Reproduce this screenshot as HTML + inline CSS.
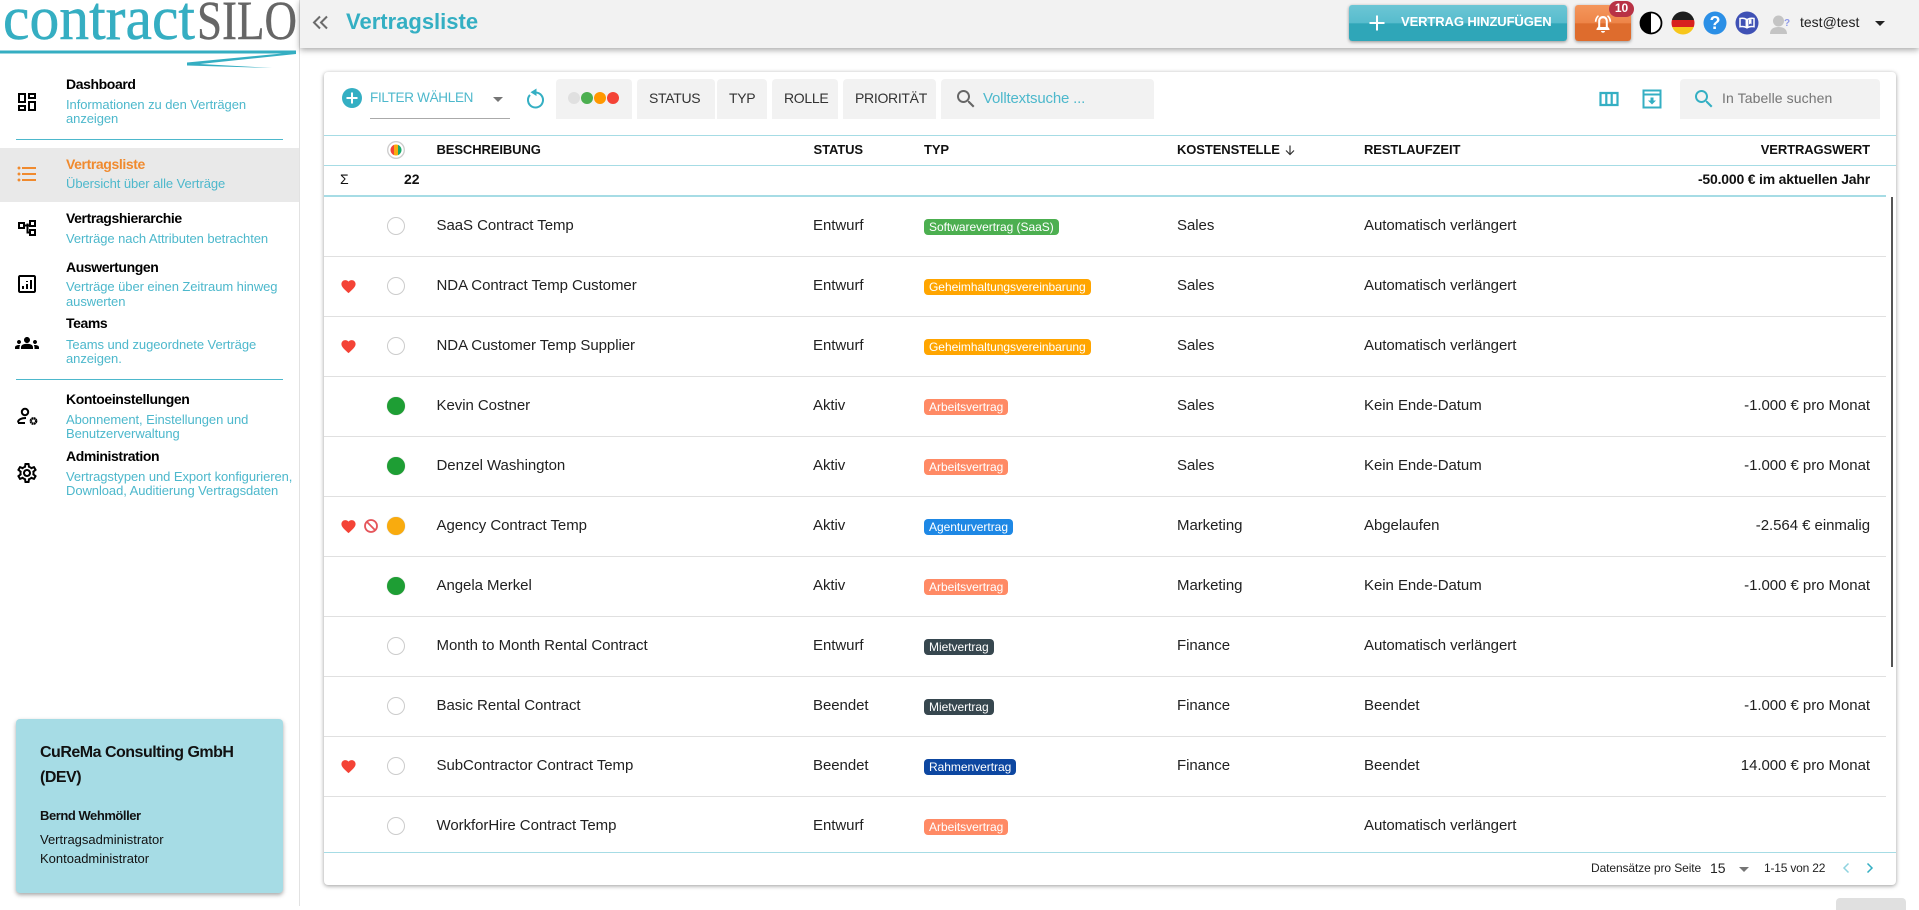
<!DOCTYPE html>
<html lang="de"><head><meta charset="utf-8"><title>Vertragsliste</title>
<style>
*{box-sizing:border-box}
html,body{margin:0;padding:0;width:1919px;height:906px;overflow:hidden;background:#fff;font-family:"Liberation Sans",sans-serif;color:#212121}
.t{position:absolute;line-height:20px;white-space:nowrap}
.a{position:absolute}
svg{position:absolute;display:block}
.nt{left:66px;font-size:14px;font-weight:bold;color:#000;letter-spacing:-.4px}
.ns{left:66px;font-size:13px;color:#4db8cc;letter-spacing:-.07px;line-height:14px}
.chip{position:absolute;top:79px;height:40px;background:#f2f2f2;border-radius:4px 4px 0 0;font-size:14px;line-height:38px;padding-left:12px;color:#333;letter-spacing:-.3px}
.th{top:140px;font-size:13px;font-weight:bold;color:#111;letter-spacing:-.1px}
.r{position:absolute;left:324px;width:1562px;height:60px;border-bottom:1px solid #e0e0e0}
.r div{position:absolute;line-height:57.500px;font-size:15px;white-space:nowrap;color:#212121;letter-spacing:-.05px}
.r .d{left:112.500px}.r .s{left:489px}.r .k{left:853px}.r .l{left:1040px}.r .v{right:16px}
.r .tag{left:600px;top:22px;height:16px;line-height:16px;border-radius:4px;padding:0 5px;font-size:12px;color:#fff;letter-spacing:-.03px}
.r .o{left:63px;top:20px;width:18px;height:18px;border-radius:50%;border:1.5px solid #ccc;background:#fff}
.r .f{border:0;box-shadow:0 0 1px #bbb}
.r svg{left:15.500px;top:20.500px}
</style></head><body>

<!-- sidebar -->
<div class="a" style="left:0;top:0;width:300px;height:906px;background:#fff;border-right:1px solid #e2e2e2"></div>
<svg style="left:0;top:0" width="299" height="72" viewBox="0 0 299 72">
<text x="3" y="39" font-family="Liberation Serif" font-size="62" fill="#35aec2" stroke="#35aec2" stroke-width=".5" textLength="192" lengthAdjust="spacingAndGlyphs">contract</text>
<text x="197" y="39" font-family="Liberation Serif" font-size="55" fill="#666" stroke="#666" stroke-width=".4" textLength="100" lengthAdjust="spacingAndGlyphs">SILO</text>
<path d="M0 50.500H296V54L200 64 272 68 187 65.500V62.500L282 53.500H0z" fill="#35aec2"/>
</svg>

<svg style="left:15px;top:90px" width="24" height="24" viewBox="0 0 24 24"><path d="M19 5v2h-4V5h4M9 5v6H5V5h4m10 8v6h-4v-6h4M9 17v2H5v-2h4M21 3h-8v6h8V3zM11 3H3v10h8V3zm10 8h-8v10h8V11zm-10 4H3v6h8v-6z"/></svg>
<div class="t nt" style="top:74px">Dashboard</div>
<div class="t ns" style="top:98px">Informationen zu den Verträgen</div>
<div class="t ns" style="top:112px">anzeigen</div>
<div class="a" style="left:16px;top:139px;width:267px;height:1px;background:#4db8cc"></div>

<div class="a" style="left:0;top:148px;width:299px;height:54px;background:#e9e9e9"></div>
<svg style="left:15px;top:162px" width="24" height="24" viewBox="0 0 24 24" fill="#f08a2e"><path d="M4 10.500c-.83 0-1.500.67-1.500 1.500s.67 1.500 1.500 1.500 1.500-.67 1.500-1.500-.67-1.500-1.500-1.500zm0-6c-.83 0-1.500.67-1.500 1.500S3.170 7.500 4 7.500 5.500 6.830 5.500 6 4.830 4.500 4 4.500zm0 12c-.83 0-1.500.68-1.500 1.500s.68 1.500 1.500 1.500 1.500-.68 1.500-1.500-.67-1.500-1.500-1.500zM7 19h14v-2H7v2zm0-6h14v-2H7v2zm0-8v2h14V5H7z"/></svg>
<div class="t nt" style="top:154px;color:#f08a2e">Vertragsliste</div>
<div class="t ns" style="top:177px">Übersicht über alle Verträge</div>

<svg style="left:15px;top:216px" width="24" height="24" viewBox="0 0 24 24" fill="none" stroke="#000" stroke-width="2"><path d="M4 7h5v5H4zM15 5h5v5h-5zM15 14h5v5h-5zM9 9.500h6M12.500 7.500v9H15"/></svg>
<div class="t nt" style="top:208px">Vertragshierarchie</div>
<div class="t ns" style="top:232px">Verträge nach Attributen betrachten</div>

<svg style="left:15px;top:272px" width="24" height="24" viewBox="0 0 24 24"><path d="M19 3H5c-1.100 0-2 .9-2 2v14c0 1.100.9 2 2 2h14c1.100 0 2-.9 2-2V5c0-1.100-.9-2-2-2zm0 16H5V5h14v14zM7 14h2v3H7zM11 12h2v5h-2zM15 8h2v9h-2zM11 9h2v1h-2z"/></svg>
<div class="t nt" style="top:257px">Auswertungen</div>
<div class="t ns" style="top:280px">Verträge über einen Zeitraum hinweg</div>
<div class="t ns" style="top:295px">auswerten</div>

<svg style="left:15px;top:331px" width="24" height="24" viewBox="0 0 24 24"><path d="M4 13c1.100 0 2-.9 2-2s-.9-2-2-2-2 .9-2 2 .9 2 2 2zm1.130 1.100c-.37-.06-.74-.1-1.130-.1-.99 0-1.930.21-2.780.58C.48 14.900 0 15.620 0 16.430V18h4.500v-1.610c0-.83.23-1.610.63-2.290zM20 13c1.100 0 2-.9 2-2s-.9-2-2-2-2 .9-2 2 .9 2 2 2zm4 3.430c0-.81-.48-1.530-1.220-1.850-.85-.37-1.790-.58-2.780-.58-.39 0-.76.04-1.130.1.4.68.63 1.460.63 2.290V18H24v-1.570zm-7.760-2.780c-1.170-.52-2.610-.9-4.240-.9s-3.070.39-4.240.9C6.680 14.130 6 15.210 6 16.390V18h12v-1.610c0-1.180-.68-2.260-1.760-2.740zM15 9c0 1.660-1.340 3-3 3s-3-1.340-3-3 1.340-3 3-3 3 1.340 3 3z"/></svg>
<div class="t nt" style="top:313px">Teams</div>
<div class="t ns" style="top:338px">Teams und zugeordnete Verträge</div>
<div class="t ns" style="top:352px">anzeigen.</div>
<div class="a" style="left:16px;top:379px;width:267px;height:1px;background:#4db8cc"></div>

<svg style="left:15px;top:405px" width="24" height="24" viewBox="0 0 24 24" fill="none" stroke="#000" stroke-width="2"><circle cx="10" cy="7" r="3.200"/><path d="M3 17.500c0-3 3.500-4.500 8-4.500M3 18h7"/><circle cx="18.500" cy="16" r="2.700" stroke-width="2.400" stroke-dasharray="1.700 .4"/></svg>
<div class="t nt" style="top:389px">Kontoeinstellungen</div>
<div class="t ns" style="top:413px">Abonnement, Einstellungen und</div>
<div class="t ns" style="top:427px">Benutzerverwaltung</div>

<svg style="left:15px;top:461px" width="24" height="24" viewBox="0 0 24 24"><path d="M19.430 12.980c.04-.32.07-.64.07-.98s-.03-.66-.07-.98l2.110-1.650c.19-.15.24-.42.12-.64l-2-3.460c-.09-.16-.26-.25-.44-.25-.06 0-.12.01-.17.03l-2.490 1c-.52-.4-1.080-.73-1.690-.98l-.38-2.650C14.460 2.180 14.250 2 14 2h-4c-.25 0-.46.18-.49.42l-.38 2.650c-.61.25-1.170.59-1.690.98l-2.490-1c-.06-.02-.12-.03-.18-.03-.17 0-.34.09-.43.25l-2 3.460c-.13.22-.07.49.12.64l2.110 1.650c-.04.32-.07.65-.07.98s.03.66.07.98l-2.110 1.650c-.19.15-.24.42-.12.64l2 3.460c.09.16.26.25.44.25.06 0 .12-.01.17-.03l2.490-1c.52.4 1.080.73 1.690.98l.38 2.650c.03.24.24.42.49.42h4c.25 0 .46-.18.49-.42l.38-2.650c.61-.25 1.170-.59 1.690-.98l2.490 1c.06.02.12.03.18.03.17 0 .34-.09.43-.25l2-3.460c.12-.22.07-.49-.12-.64l-2.110-1.650zm-1.980-1.710c.04.31.05.52.05.73s-.02.43-.05.73l-.14 1.130.89.7 1.080.84-.7 1.210-1.270-.51-1.040-.42-.9.68c-.43.32-.84.56-1.250.73l-1.060.43-.16 1.130-.2 1.350h-1.400l-.19-1.350-.16-1.130-1.060-.43c-.43-.18-.83-.41-1.230-.71l-.91-.7-1.060.43-1.270.51-.7-1.210 1.080-.84.89-.7-.14-1.130c-.03-.31-.05-.54-.05-.74s.02-.43.05-.73l.14-1.130-.89-.7-1.080-.84.7-1.210 1.270.51 1.040.42.9-.68c.43-.32.84-.56 1.250-.73l1.060-.43.16-1.130.2-1.350h1.390l.19 1.350.16 1.130 1.060.43c.43.18.83.41 1.230.71l.91.7 1.060-.43 1.270-.51.7 1.210-1.070.85-.89.7.14 1.130zM12 8c-2.210 0-4 1.790-4 4s1.790 4 4 4 4-1.790 4-4-1.790-4-4-4zm0 6c-1.100 0-2-.9-2-2s.9-2 2-2 2 .9 2 2-.9 2-2 2z"/></svg>
<div class="t nt" style="top:446px">Administration</div>
<div class="t ns" style="top:470px">Vertragstypen und Export konfigurieren,</div>
<div class="t ns" style="top:484px">Download, Auditierung Vertragsdaten</div>

<div class="a" style="left:16px;top:719px;width:267px;height:174px;background:#a6dce5;border-radius:4px;box-shadow:0 2px 4px rgba(0,0,0,.35)"></div>
<div class="t" style="left:40px;top:743px;font-size:16px;font-weight:bold;color:#111;letter-spacing:-.5px">CuReMa Consulting GmbH</div>
<div class="t" style="left:40px;top:768px;font-size:16px;font-weight:bold;color:#111;letter-spacing:-.5px">(DEV)</div>
<div class="t" style="left:40px;top:806px;font-size:13px;font-weight:bold;color:#111;letter-spacing:-.45px">Bernd Wehmöller</div>
<div class="t" style="left:40px;top:830px;font-size:13px;color:#111">Vertragsadministrator</div>
<div class="t" style="left:40px;top:849px;font-size:13px;color:#111">Kontoadministrator</div>

<!-- top bar -->
<div class="a" style="left:300px;top:0;width:1619px;height:48px;background:#f2f2f2;box-shadow:0 2px 6px rgba(0,0,0,.35)"></div>
<svg style="left:312px;top:14px" width="18" height="17" viewBox="0 0 18 17" fill="none" stroke="#6b6b6b" stroke-width="2"><path d="M8 2.500 2 8.500l6 6M15 2.500l-6 6 6 6"/></svg>
<div class="t" style="left:346px;top:12px;font-size:22px;font-weight:bold;color:#34afc3">Vertragsliste</div>

<div class="a" style="left:1349px;top:5px;width:218px;height:36px;border-radius:3px;background:linear-gradient(#6cc6d5 0,#57bccd 50%,#2fa6b8 52%,#2fa6b8 100%);box-shadow:0 1px 3px rgba(0,0,0,.4)"></div>
<svg style="left:1368px;top:14px" width="18" height="18" viewBox="0 0 18 18" stroke="#fff" stroke-width="2"><path d="M9 1.500v15M1.500 9h15"/></svg>
<div class="t" style="left:1401px;top:12px;font-size:13px;font-weight:bold;color:#fff;letter-spacing:-.1px">VERTRAG HINZUFÜGEN</div>

<div class="a" style="left:1575px;top:5px;width:56px;height:36px;border-radius:3px;background:linear-gradient(#f4965c 0,#ee8548 50%,#de6c2d 52%,#de6c2d 100%);box-shadow:0 1px 3px rgba(0,0,0,.4)"></div>
<svg style="left:1591px;top:11px" width="24" height="24" viewBox="0 0 24 24" fill="#fff"><path d="M12 5c-3 0-4.800 2.300-4.800 5v5.500L5.500 18v1h13v-1l-1.700-2.500V10c0-2.700-1.800-5-4.800-5zm0 2.200c1.800 0 2.800 1.400 2.800 3.100V16H9.200v-5.700c0-1.700 1-3.100 2.800-3.100zM10 20h4c0 1.100-.9 1.700-2 1.700S10 21.100 10 20zM3.800 10.800C3.900 8 5 5.700 7 4.100l1 1.200C6.500 6.600 5.600 8.500 5.500 10.800zm16.400 0C20.100 8 19 5.700 17 4.100l-1 1.200c1.500 1.300 2.400 3.200 2.500 5.500z"/></svg>
<div class="t" style="left:1609px;top:1px;width:25px;height:16px;border-radius:8px;background:#b83245;color:#fff;font-size:12px;font-weight:bold;line-height:15px;text-align:center">10</div>

<svg style="left:1639px;top:11px" width="24" height="24" viewBox="0 0 24 24"><circle cx="12" cy="12" r="10.500" fill="#fff" stroke="#000" stroke-width="1.800"/><path d="M12 1.500a10.500 10.500 0 0 0 0 21z"/></svg>
<svg style="left:1671px;top:11px" width="24" height="24" viewBox="0 0 24 24"><defs><clipPath id="fl"><circle cx="12" cy="12" r="11.500"/></clipPath></defs><g clip-path="url(#fl)"><rect width="24" height="9" y="0" fill="#1d1d1d"/><rect width="24" height="7" y="9" fill="#d8201f"/><rect width="24" height="8" y="16" fill="#f7c61b"/></g></svg>
<svg style="left:1703px;top:11px" width="24" height="24" viewBox="0 0 24 24"><circle cx="12" cy="12" r="11.500" fill="#2b8fe6"/></svg>
<div class="t" style="left:1703px;top:12px;width:24px;text-align:center;font-size:18px;font-weight:bold;color:#fff;line-height:22px">?</div>
<svg style="left:1735px;top:11px" width="24" height="24" viewBox="0 0 24 24"><circle cx="12" cy="12" r="11.500" fill="#3f51b5"/><path d="M5 7.500c2.500-.6 4.500-.3 6.300.8v8.200c-1.800-1-3.800-1.300-6.300-.8zM19 7.500c-2.500-.6-4.500-.3-6.300.8v8.200c1.800-1 3.800-1.300 6.300-.8z" fill="none" stroke="#fff" stroke-width="1.500"/><path d="M14 8.500v5l1.500-1 1 1v-5.500z" fill="#fff"/></svg>
<svg style="left:1769px;top:14px" width="24" height="22" viewBox="0 0 24 22"><circle cx="9.500" cy="7" r="5.500" fill="#c4c4c4"/><path d="M1 20c0-5 3.500-7 8.500-7s8.500 2 8.500 7z" fill="#c4c4c4"/><text x="15" y="12" font-size="10" font-weight="bold" font-family="Liberation Sans" fill="#8f9ae8">?</text></svg>
<div class="t" style="left:1800px;top:12px;font-size:14px;color:#212121">test@test</div>
<div class="a" style="left:1875px;top:21px;width:0;height:0;border-left:5px solid transparent;border-right:5px solid transparent;border-top:5px solid #222"></div>

<!-- main card -->
<div class="a" style="left:324px;top:72px;width:1572px;height:813px;background:#fff;border-radius:4px;box-shadow:0 1px 4px rgba(0,0,0,.4)"></div>

<svg style="left:342px;top:88px" width="20" height="20" viewBox="0 0 20 20"><circle cx="10" cy="10" r="10" fill="#34afc3"/><path d="M10 4.500v11M4.500 10h11" stroke="#fff" stroke-width="2"/></svg>
<div class="t" style="left:370px;top:88px;font-size:13.500px;color:#4db8cc;letter-spacing:-.3px">FILTER WÄHLEN</div>
<div class="a" style="left:493px;top:97px;width:0;height:0;border-left:5px solid transparent;border-right:5px solid transparent;border-top:5px solid #757575"></div>
<div class="a" style="left:370px;top:118px;width:140px;height:1px;background:#aaa"></div>
<svg style="left:525px;top:87px" width="20" height="22" viewBox="0 0 20 22" fill="none" stroke="#34afc3" stroke-width="2"><path d="M10.500 5.500a7.500 7.500 0 1 1-5.500 2.400"/><path d="M11.500 1.500v7.500L5.500 5.200z" fill="#34afc3" stroke="none"/></svg>

<div class="chip" style="left:556px;width:76px"></div>
<svg style="left:566px;top:91px" width="56" height="14" viewBox="0 0 56 14"><circle cx="8" cy="7" r="6" fill="#e0e0e0"/><circle cx="21" cy="7" r="6" fill="#4caf50"/><circle cx="34" cy="7" r="6" fill="#ff9800"/><circle cx="47" cy="7" r="6" fill="#f44336"/></svg>
<div class="chip" style="left:637px;width:78px">STATUS</div>
<div class="chip" style="left:717px;width:50px">TYP</div>
<div class="chip" style="left:772px;width:66px">ROLLE</div>
<div class="chip" style="left:843px;width:93px">PRIORITÄT</div>
<div class="chip" style="left:941px;width:213px"></div>
<svg style="left:954px;top:87px" width="24" height="24" viewBox="0 0 24 24"><path fill="#666" d="M15.500 14h-.79l-.28-.27C15.410 12.590 16 11.110 16 9.500 16 5.910 13.090 3 9.500 3S3 5.910 3 9.500 5.910 16 9.500 16c1.610 0 3.090-.59 4.230-1.570l.27.28v.79l5 4.990L20.490 19l-4.990-5zm-6 0C7.010 14 5 11.990 5 9.500S7.010 5 9.500 5 14 7.010 14 9.500 11.990 14 9.500 14z"/></svg>
<div class="t" style="left:983px;top:89px;font-size:15px;color:#4db8cc;letter-spacing:-.17px">Volltextsuche ...</div>

<svg style="left:1597px;top:87px" width="24" height="24" viewBox="0 0 24 24" fill="none" stroke="#34afc3" stroke-width="2.200"><path d="M3.500 6h17v12h-17zM9.300 6v12M14.700 6v12"/></svg>
<svg style="left:1640px;top:87px" width="24" height="24" viewBox="0 0 24 24" fill="none" stroke="#34afc3" stroke-width="2"><path d="M3.500 3.500h17v17h-17zM3.500 7.500h17"/><path d="M10.500 10.500h3v3h2.500l-4 4-4-4h2.500z" fill="#34afc3" stroke="none"/></svg>
<div class="chip" style="left:1680px;width:200px"></div>
<svg style="left:1692px;top:87px" width="24" height="24" viewBox="0 0 24 24"><path fill="#34afc3" d="M15.500 14h-.79l-.28-.27C15.410 12.590 16 11.110 16 9.500 16 5.910 13.090 3 9.500 3S3 5.910 3 9.500 5.910 16 9.500 16c1.610 0 3.090-.59 4.230-1.570l.27.28v.79l5 4.990L20.490 19l-4.990-5zm-6 0C7.010 14 5 11.990 5 9.500S7.010 5 9.500 5 14 7.010 14 9.500 11.990 14 9.500 14z"/></svg>
<div class="t" style="left:1722px;top:88px;font-size:14px;color:#757575;letter-spacing:.1px">In Tabelle suchen</div>

<!-- table header -->
<div class="a" style="left:324px;top:135px;width:1572px;height:1px;background:#a6dce5"></div>
<div class="a" style="left:324px;top:165px;width:1572px;height:1px;background:#a6dce5"></div>
<div class="a" style="left:324px;top:195px;width:1562px;height:2px;background:#a6dce5"></div>
<svg style="left:387px;top:141px" width="18" height="18" viewBox="0 0 18 18"><circle cx="9" cy="9" r="8.300" fill="#fff" stroke="#ccc" stroke-width="1.300"/><defs><clipPath id="hc"><circle cx="9" cy="9" r="5.500"/></clipPath></defs><g clip-path="url(#hc)"><rect x="3" y="3" width="4" height="12" fill="#f44336"/><rect x="7" y="3" width="4" height="12" fill="#f9ab0e"/><rect x="11" y="3" width="4" height="12" fill="#19a96b"/></g></svg>
<div class="t th" style="left:436.500px">BESCHREIBUNG</div>
<div class="t th" style="left:813.500px">STATUS</div>
<div class="t th" style="left:924px">TYP</div>
<div class="t th" style="left:1177px">KOSTENSTELLE</div>
<svg style="left:1283px;top:143px" width="14" height="14" viewBox="0 0 14 14" fill="none" stroke="#333" stroke-width="1.200"><path d="M7 2.500v9M3 7.500l4 4 4-4"/></svg>
<div class="t th" style="left:1364px">RESTLAUFZEIT</div>
<div class="t th" style="right:49px">VERTRAGSWERT</div>
<div class="t" style="left:340px;top:169px;font-size:14px;color:#111">Σ</div>
<div class="t" style="left:404px;top:169px;font-size:14px;font-weight:bold;color:#111">22</div>
<div class="t" style="right:49px;top:169px;font-size:14px;font-weight:bold;color:#111;letter-spacing:-.2px">-50.000 € im aktuellen Jahr</div>

<!-- rows -->
<div class="r" style="top:197px"><div class="o"></div><div class="d">SaaS Contract Temp</div><div class="s">Entwurf</div><div class="tag" style="background:#4caf50">Softwarevertrag (SaaS)</div><div class="k">Sales</div><div class="l">Automatisch verlängert</div></div>

<div class="r" style="top:257px"><svg width="17" height="17" viewBox="0 0 24 24" fill="#f44336"><path d="M12 21.350l-1.450-1.320C5.400 15.360 2 12.280 2 8.500 2 5.420 4.420 3 7.500 3c1.740 0 3.410.81 4.500 2.090C13.090 3.810 14.760 3 16.500 3 19.580 3 22 5.420 22 8.500c0 3.780-3.400 6.860-8.550 11.540L12 21.350z"/></svg><div class="o"></div><div class="d">NDA Contract Temp Customer</div><div class="s">Entwurf</div><div class="tag" style="background:#ffa500">Geheimhaltungsvereinbarung</div><div class="k">Sales</div><div class="l">Automatisch verlängert</div></div>

<div class="r" style="top:317px"><svg width="17" height="17" viewBox="0 0 24 24" fill="#f44336"><path d="M12 21.350l-1.450-1.320C5.400 15.360 2 12.280 2 8.500 2 5.420 4.420 3 7.500 3c1.740 0 3.410.81 4.500 2.090C13.090 3.810 14.760 3 16.500 3 19.580 3 22 5.420 22 8.500c0 3.780-3.400 6.860-8.550 11.540L12 21.350z"/></svg><div class="o"></div><div class="d">NDA Customer Temp Supplier</div><div class="s">Entwurf</div><div class="tag" style="background:#ffa500">Geheimhaltungsvereinbarung</div><div class="k">Sales</div><div class="l">Automatisch verlängert</div></div>

<div class="r" style="top:377px"><div class="o f" style="background:#1e9e34"></div><div class="d">Kevin Costner</div><div class="s">Aktiv</div><div class="tag" style="background:#ff8a65">Arbeitsvertrag</div><div class="k">Sales</div><div class="l">Kein Ende-Datum</div><div class="v">-1.000 € pro Monat</div></div>

<div class="r" style="top:437px"><div class="o f" style="background:#1e9e34"></div><div class="d">Denzel Washington</div><div class="s">Aktiv</div><div class="tag" style="background:#ff8a65">Arbeitsvertrag</div><div class="k">Sales</div><div class="l">Kein Ende-Datum</div><div class="v">-1.000 € pro Monat</div></div>

<div class="r" style="top:497px"><svg width="17" height="17" viewBox="0 0 24 24" fill="#f44336"><path d="M12 21.350l-1.450-1.320C5.400 15.360 2 12.280 2 8.500 2 5.420 4.420 3 7.500 3c1.740 0 3.410.81 4.500 2.090C13.090 3.810 14.760 3 16.500 3 19.580 3 22 5.420 22 8.500c0 3.780-3.400 6.860-8.550 11.540L12 21.350z"/></svg><svg style="left:39px;top:21px" width="16" height="16" viewBox="0 0 16 16" fill="none" stroke="#e5555a" stroke-width="1.800"><circle cx="8" cy="8" r="6"/><path d="M3.800 3.800l8.400 8.400"/></svg><div class="o f" style="background:#f9ab0e"></div><div class="d">Agency Contract Temp</div><div class="s">Aktiv</div><div class="tag" style="background:#1e88e5">Agenturvertrag</div><div class="k">Marketing</div><div class="l">Abgelaufen</div><div class="v">-2.564 € einmalig</div></div>

<div class="r" style="top:557px"><div class="o f" style="background:#1e9e34"></div><div class="d">Angela Merkel</div><div class="s">Aktiv</div><div class="tag" style="background:#ff8a65">Arbeitsvertrag</div><div class="k">Marketing</div><div class="l">Kein Ende-Datum</div><div class="v">-1.000 € pro Monat</div></div>

<div class="r" style="top:617px"><div class="o"></div><div class="d">Month to Month Rental Contract</div><div class="s">Entwurf</div><div class="tag" style="background:#37474f">Mietvertrag</div><div class="k">Finance</div><div class="l">Automatisch verlängert</div></div>

<div class="r" style="top:677px"><div class="o"></div><div class="d">Basic Rental Contract</div><div class="s">Beendet</div><div class="tag" style="background:#37474f">Mietvertrag</div><div class="k">Finance</div><div class="l">Beendet</div><div class="v">-1.000 € pro Monat</div></div>

<div class="r" style="top:737px"><svg width="17" height="17" viewBox="0 0 24 24" fill="#f44336"><path d="M12 21.350l-1.450-1.320C5.400 15.360 2 12.280 2 8.500 2 5.420 4.420 3 7.500 3c1.740 0 3.410.81 4.500 2.090C13.090 3.810 14.760 3 16.500 3 19.580 3 22 5.420 22 8.500c0 3.780-3.400 6.860-8.550 11.540L12 21.350z"/></svg><div class="o"></div><div class="d">SubContractor Contract Temp</div><div class="s">Beendet</div><div class="tag" style="background:#0d47a1">Rahmenvertrag</div><div class="k">Finance</div><div class="l">Beendet</div><div class="v">14.000 € pro Monat</div></div>

<div class="r" style="top:797px;border:0;height:55px"><div class="o"></div><div class="d">WorkforHire Contract Temp</div><div class="s">Entwurf</div><div class="tag" style="background:#ff8a65">Arbeitsvertrag</div><div class="l">Automatisch verlängert</div></div>

<div class="a" style="left:1891px;top:197px;width:2px;height:470px;background:#555"></div>
<div class="a" style="left:324px;top:852px;width:1572px;height:1px;background:#a6dce5"></div>

<!-- footer -->
<div class="t" style="left:1591px;top:858px;font-size:12px;color:#222;letter-spacing:-.1px">Datensätze pro Seite</div>
<div class="t" style="left:1710px;top:858px;font-size:14px;color:#222">15</div>
<div class="a" style="left:1739px;top:867px;width:0;height:0;border-left:5px solid transparent;border-right:5px solid transparent;border-top:5px solid #757575"></div>
<div class="t" style="left:1764px;top:858px;font-size:12px;color:#222;letter-spacing:-.2px">1-15 von 22</div>
<svg style="left:1840px;top:861px" width="12" height="14" viewBox="0 0 12 14" fill="none" stroke="#8fd3df" stroke-width="1.500"><path d="M8.500 2.500 4 7l4.500 4.500"/></svg>
<svg style="left:1864px;top:861px" width="12" height="14" viewBox="0 0 12 14" fill="none" stroke="#34afc3" stroke-width="1.500"><path d="M3.500 2.500 8 7l-4.500 4.500"/></svg>

<div class="a" style="left:1836px;top:898px;width:70px;height:12px;background:#e0e0e0;border-radius:4px 4px 0 0"></div>
</body></html>
